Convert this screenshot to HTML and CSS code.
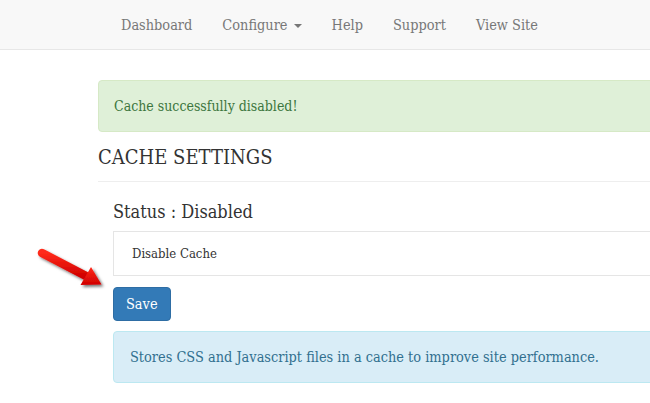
FILE: index.html
```html
<!DOCTYPE html>
<html>
<head>
  <meta charset="UTF-8">
  <link rel="stylesheet" href="styles.css">
</head>
<body>
  <nav class="navbar">
    <ul class="nav-links">
      <li>Dashboard</li>
      <li>Configure <span class="caret"></span></li>
      <li>Help</li>
      <li>Support</li>
      <li>View Site</li>
    </ul>
  </nav>

  <div class="page">
    <div class="content">
      <div class="alert alert-success">Cache successfully disabled!</div>
      <h2 class="page-title">CACHE SETTINGS</h2>

      <div class="settings">
        <h3 class="status">Status : Disabled</h3>
        <div class="option-box">Disable Cache</div>
        <button class="btn-save">Save</button>
        <div class="alert alert-info">Stores CSS and Javascript files in a cache to improve site performance.</div>
      </div>
    </div>
  </div>

  <svg class="arrow" width="90" height="60" viewBox="0 0 90 60">
    <defs>
      <linearGradient id="red" x1="0" y1="0" x2="0" y2="1">
        <stop offset="0" stop-color="#ff2a1a"/>
        <stop offset="1" stop-color="#d00000"/>
      </linearGradient>
      <filter id="shadow" x="-20%" y="-20%" width="150%" height="150%">
        <feDropShadow dx="2" dy="2" stdDeviation="1.6" flood-color="#000" flood-opacity="0.55"/>
      </filter>
    </defs>
    <g filter="url(#shadow)" fill="url(#red)">
      <line x1="12" y1="13" x2="57" y2="36.5" stroke="url(#red)" stroke-width="8.5" stroke-linecap="round"/>
      <polygon points="61,27 71.5,44.5 50.5,45"/>
    </g>
  </svg>
</body>
</html>
```

FILE: styles.css
```css
body{
  margin: 0;
  font-family: "DejaVu Serif", "Liberation Serif", serif;
  font-stretch: condensed;
  font-size: 14px;
  line-height: 20px;
  color: #333;
  background-color: #fff;
}
.navbar{
  background-color: #f8f8f8;
  border-bottom: 1px solid #e7e7e7;
  height: 49px;
}
.nav-links{
  display: flex;
  list-style: none;
  margin: 0;
  padding: 1px 0 0 106px;
}
.nav-links li{
  padding: 0 15px;
  line-height: 48px;
  color: #777;
  font-size: 14.4px;
}
.caret{
  display: inline-block;
  width: 0;
  height: 0;
  margin-left: 2px;
  vertical-align: middle;
  border-top: 4px solid #777;
  border-left: 4px solid transparent;
  border-right: 4px solid transparent;
}
.page{
  overflow: hidden;
}
.content{
  margin-left: 98px;
  width: 700px;
}
.alert{
  border: 1px solid transparent;
  border-radius: 4px;
  padding: 15px;
}
.alert-success{
  margin-top: 30px;
  background-color: #dff0d8;
  border-color: #d6e9c6;
  color: #3c763d;
}
.alert-info{
  margin-top: 10px;
  padding-left: 16px;
  font-size: 14.4px;
  background-color: #d9edf7;
  border-color: #bce8f1;
  color: #31708f;
}
.page-title{
  margin: 14px 0 0;
  padding-bottom: 12px;
  border-bottom: 1px solid #eee;
  font-size: 20px;
  font-weight: normal;
  line-height: 23px;
}
.settings{
  padding-left: 15px;
}
.status{
  margin: 20px 0 0;
  font-size: 18px;
  font-weight: normal;
  line-height: 20px;
}
.option-box{
  margin-top: 9px;
  padding: 12px 18px 11px;
  border: 1px solid #e5e5e5;
  border-right: none;
  font-size: 13px;
}
.btn-save{
  display: block;
  margin-top: 11px;
  padding: 6px 12px;
  font-family: inherit;
  font-stretch: condensed;
  font-size: 14.4px;
  line-height: 20px;
  color: #fff;
  background-color: #337ab7;
  border: 1px solid #2e6da4;
  border-radius: 4px;
}
.arrow{
  position: absolute;
  left: 30px;
  top: 240px;
}
```
